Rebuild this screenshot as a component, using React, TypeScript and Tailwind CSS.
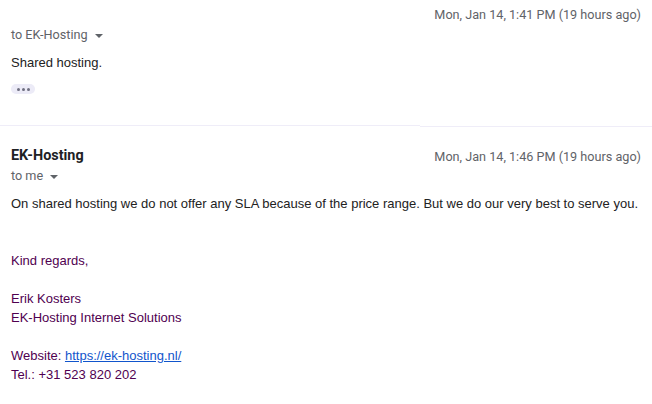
import React from 'react';

const meta = "font-['Roboto',_'Liberation_Sans',_sans-serif] text-[12.65px] leading-4 text-[#5f6368]";
const body = "font-['Liberation_Sans',_Arial,_sans-serif] text-[13px] leading-[19px]";

function Caret() {
  return (
    <svg width="8" height="4" viewBox="0 0 8 4" className="ml-[7px] mt-[1px]">
      <path d="M0 0 L8 0 L4 4 Z" fill="#5f6368" />
    </svg>
  );
}

export default function App() {
  return (
    <div className="w-[652px] h-[404px] bg-white overflow-hidden">
      {/* first message (collapsed tail) */}
      <div className="px-[11px] pt-[7px] h-[125px]">
        <div className="flex justify-end">
          <span className={meta}>Mon, Jan 14, 1:41 PM (19 hours ago)</span>
        </div>
        <div className="flex items-center mt-[4px]">
          <span className={meta}>to EK-Hosting</span>
          <Caret />
        </div>
        <div className={`${body} text-[#222222] mt-[10px]`}>Shared hosting.</div>
        <div className="mt-[12px] w-[24px] h-[10px] rounded-full bg-[#ecebf7] flex items-center justify-center gap-[2px]">
          <span className="w-[3px] h-[3px] rounded-full bg-[#6f6f80]" />
          <span className="w-[3px] h-[3px] rounded-full bg-[#6f6f80]" />
          <span className="w-[3px] h-[3px] rounded-full bg-[#6f6f80]" />
        </div>
      </div>

      {/* divider, slightly stepped like the original */}
      <div className="flex h-[2px]">
        <div className="w-[420px] h-px bg-[#efedf8]" />
        <div className="flex-1 h-px mt-px bg-[#efedf8]" />
      </div>

      {/* second message */}
      <div className="px-[11px] pt-[19px]">
        <div className="flex justify-between items-center">
          <span className="font-['Roboto',_'Liberation_Sans',_sans-serif] text-[14.4px] leading-5 font-bold text-[#202124]">
            EK-Hosting
          </span>
          <span className={`${meta} mt-[2px]`}>Mon, Jan 14, 1:46 PM (19 hours ago)</span>
        </div>
        <div className="flex items-center mt-[2px]">
          <span className={meta}>to me</span>
          <Caret />
        </div>
        <div className={`${body} text-[#222222] mt-[10px]`}>
          <div>On shared hosting we do not offer any SLA because of the price range. But we do our very best to serve you.</div>
          <div className="h-[38px]" />
          <div className="text-[#500050]">
            <div>Kind regards,</div>
            <div className="h-[19px]" />
            <div>Erik Kosters</div>
            <div>EK-Hosting Internet Solutions</div>
            <div className="h-[19px]" />
            <div>
              Website: <a href="#" className="text-[#1155cc] underline">https://ek-hosting.nl/</a>
            </div>
            <div>Tel.: +31 523 820 202</div>
          </div>
        </div>
      </div>
    </div>
  );
}
